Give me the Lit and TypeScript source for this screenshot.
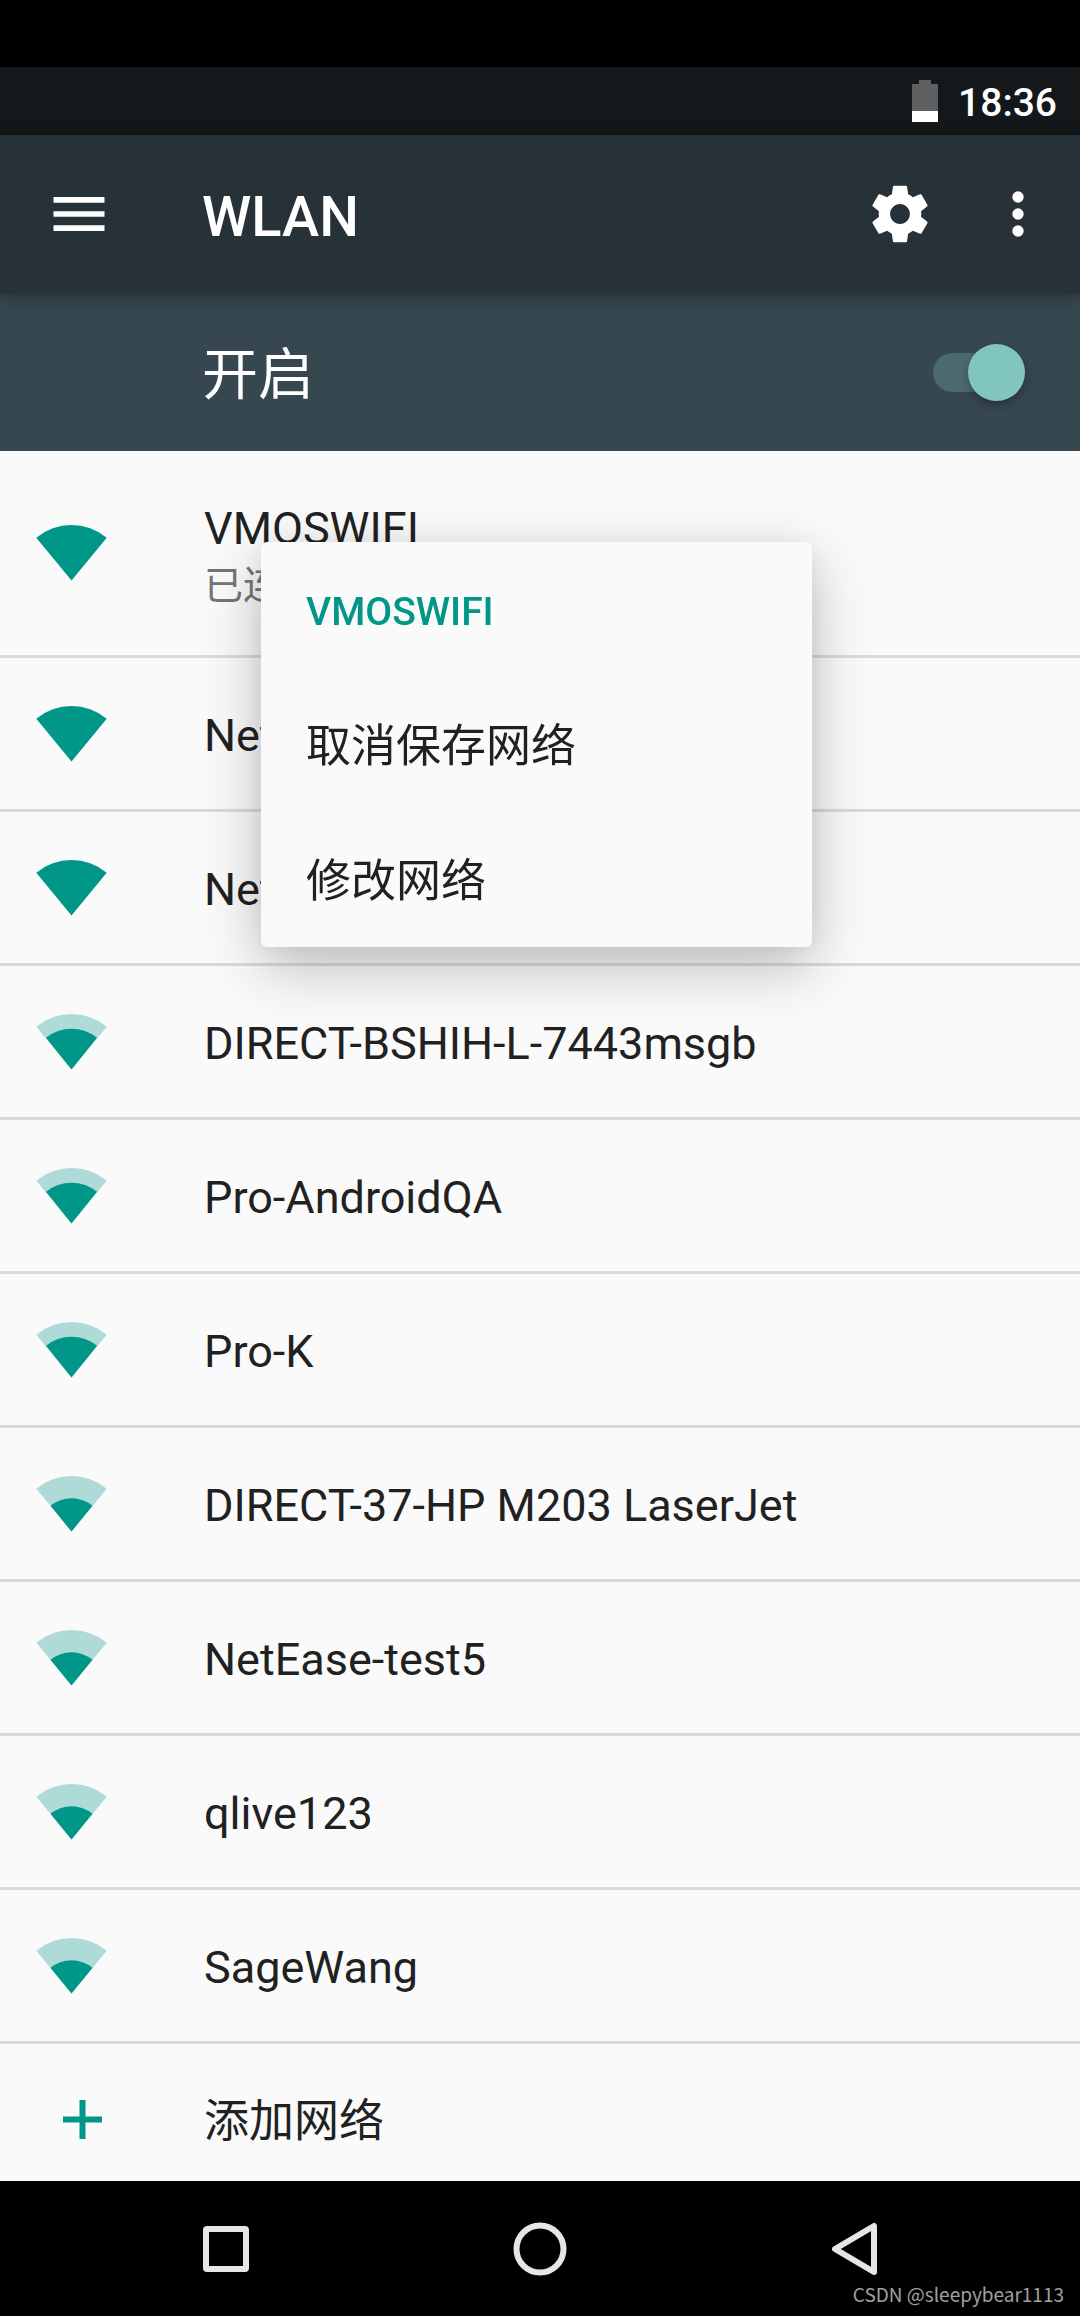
import { LitElement, html, css, svg, nothing } from "lit";
import { customElement, property, state } from "lit/decorators.js";

interface Network {
  name: string;
  level: 2 | 3 | 4;
  status?: string;
}

const NETWORKS: Network[] = [
  { name: "VMOSWIFI", level: 4, status: "已连接" },
  { name: "NetEase", level: 4 },
  { name: "NetEase", level: 4 },
  { name: "DIRECT-BSHIH-L-7443msgb", level: 3 },
  { name: "Pro-AndroidQA", level: 3 },
  { name: "Pro-K", level: 3 },
  { name: "DIRECT-37-HP M203 LaserJet", level: 2 },
  { name: "NetEase-test5", level: 2 },
  { name: "qlive123", level: 2 },
  { name: "SageWang", level: 2 },
];

/* Filled wedge for each signal level; the full fan sits faded behind it. */
const WEDGES = {
  2: "M36.5 55.5 L15.5 29.8 A33.2 33.2 0 0 1 57.5 29.8 Z",
  3: "M36.5 55.5 L11 23.8 A40.6 40.6 0 0 1 62 23.8 Z",
  4: "M36.5 55.5 L1.3 12.7 A55.4 55.4 0 0 1 71.7 12.7 Z",
};

@customElement("wifi-signal")
export class WifiSignal extends LitElement {
  static styles = css`
    :host {
      display: block;
      flex: none;
      color: #009688;
    }
    .icon {
      display: block;
      width: 72px;
      height: 56px;
      fill: currentColor;
    }
    .faded {
      opacity: 0.3;
    }
  `;

  @property({ type: Number }) level: 2 | 3 | 4 = 4;

  render() {
    return html`
      <svg class="icon" viewBox="0 0 72 56" aria-hidden="true">
        ${this.level < 4 ? svg`<path class="faded" d=${WEDGES[4]} />` : nothing}
        <path d=${WEDGES[this.level]} />
      </svg>
    `;
  }
}

@customElement("app-root")
export class AppRoot extends LitElement {
  static styles = css`
    :host {
      display: flex;
      flex-direction: column;
      height: 100vh;
      position: relative;
      background: #000;
      color: #212121;
      font-family: Roboto, "Noto Sans CJK SC", sans-serif;
      font-size: 45px;
      line-height: 54px;
    }
    button {
      margin: 0;
      padding: 0;
      border: 0;
      background: none;
      color: inherit;
      font: inherit;
      text-align: left;
      cursor: pointer;
    }
    svg {
      display: block;
    }
    h1,
    h2,
    ul {
      margin: 0;
      padding: 0;
      list-style: none;
      font-weight: 500;
    }
    .status {
      display: flex;
      flex: none;
      align-items: center;
      justify-content: flex-end;
      gap: 20px;
      height: 68px;
      margin-top: 67px;
      padding-right: 23px;
      background: #14181b;
      color: #fff;
      font-size: 39px;
      font-weight: 500;
    }
    .clock {
      padding-top: 4px;
    }
    .battery {
      width: 26px;
      height: 42px;
    }
    .toolbar {
      display: flex;
      flex: none;
      align-items: center;
      height: 158px;
      padding: 0 28px 0 45px;
      position: relative;
      z-index: 1;
      background: #273238;
      color: #fff;
      box-shadow: 0 4px 14px rgba(0, 0, 0, 0.35);
    }
    .title {
      flex: 1;
      padding: 5px 0 0 89px;
      font-size: 56px;
      line-height: 64px;
    }
    .tool {
      flex: none;
      fill: currentColor;
    }
    .tool svg {
      width: 68px;
      height: 68px;
    }
    .tool + .tool {
      margin-left: 50px;
    }
    .switch-bar {
      display: flex;
      flex: none;
      align-items: center;
      justify-content: space-between;
      height: 158px;
      padding: 0 55px 0 202px;
      background: #37474f;
      color: #fff;
      font-size: 56px;
      line-height: 64px;
    }
    .switch-label {
      padding-top: 5px;
    }
    .toggle {
      appearance: none;
      display: flex;
      align-items: center;
      width: 92px;
      height: 39px;
      margin: 0;
      border-radius: 20px;
      background: linear-gradient(90deg, #4b6a6d 60px, transparent 60px);
      cursor: pointer;
    }
    .toggle::before {
      content: "";
      width: 57px;
      height: 57px;
      border-radius: 50%;
      background: #eceff1;
      box-shadow: 0 4px 8px rgba(0, 0, 0, 0.3);
    }
    .toggle:checked {
      justify-content: flex-end;
    }
    .toggle:checked::before {
      background: #80c6bf;
    }
    .list {
      flex: 1;
      min-height: 0;
      overflow-y: auto;
      scrollbar-width: none;
      background: #fafafa;
      font-weight: 400;
    }
    .list li + li {
      border-top: 3px solid #dadada;
    }
    .row {
      display: flex;
      align-items: center;
      gap: 97px;
      width: 100%;
      height: 151px;
      padding-left: 35px;
    }
    .row.tall {
      height: 204px;
    }
    .label {
      display: flex;
      flex-direction: column;
      gap: 3px;
      padding-top: 4px;
    }
    .tall .label {
      padding-top: 9px;
    }
    .note {
      color: #757575;
      font-size: 39px;
    }
    .plus {
      width: 72px;
      height: 56px;
      fill: #009688;
    }
    .menu {
      position: absolute;
      left: 261px;
      top: 542px;
      z-index: 2;
      display: flex;
      flex-direction: column;
      width: 551px;
      border-radius: 6px;
      background: #fafafa;
      box-shadow: 0 20px 60px rgba(0, 0, 0, 0.25), 0 0 28px rgba(0, 0, 0, 0.06);
    }
    .menu-title,
    .menu-item {
      display: flex;
      align-items: center;
      box-sizing: border-box;
      height: 135px;
      padding: 4px 45px 0;
    }
    .menu-title {
      color: #009688;
      font-size: 39px;
    }
    .nav {
      display: grid;
      grid-template-columns: repeat(3, 1fr);
      flex: none;
      height: 135px;
      padding: 0 69px;
      background: #000;
    }
    .nav-button {
      display: grid;
      place-items: center;
    }
    .nav-button svg {
      width: 56px;
      height: 56px;
      fill: none;
      stroke: #e6e6e6;
      stroke-width: 6;
      stroke-linejoin: round;
    }
    .credit {
      position: absolute;
      right: 16px;
      bottom: 10px;
      color: #a0a0a0;
      font-family: "Noto Sans CJK SC", sans-serif;
      font-size: 19px;
      line-height: 24px;
    }
  `;

  @state() private enabled = true;

  private toggle(e: Event) {
    this.enabled = (e.target as HTMLInputElement).checked;
  }

  private renderNetwork(n: Network) {
    return html`
      <li>
        <button class="row ${n.status ? "tall" : ""}">
          <wifi-signal .level=${n.level}></wifi-signal>
          <span class="label">
            <span>${n.name}</span>
            ${n.status ? html`<span class="note">${n.status}</span>` : nothing}
          </span>
        </button>
      </li>
    `;
  }

  render() {
    return html`
      <div class="status">
        <svg class="battery" viewBox="0 0 26 42" role="img" aria-label="电池">
          <path fill="#5e5f60" d="M7 0h12v4h7v27H0V4h7z" />
          <path fill="#fff" d="M0 31h26v11H0z" />
        </svg>
        <span class="clock">18:36</span>
      </div>

      <header class="toolbar">
        <button class="tool" aria-label="菜单">
          <svg viewBox="0 0 24 24"><path d="M3 18h18v-2H3v2zm0-5h18v-2H3v2zm0-7v2h18V6H3z" /></svg>
        </button>
        <h1 class="title">WLAN</h1>
        <button class="tool" aria-label="设置">
          <svg viewBox="0 0 24 24">
            <path
              d="M19.43 12.98c.04-.32.07-.64.07-.98s-.03-.66-.07-.98l2.11-1.65c.19-.15.24-.42.12-.64l-2-3.46c-.12-.22-.39-.3-.61-.22l-2.49 1c-.52-.4-1.08-.73-1.69-.98l-.38-2.65C14.46 2.18 14.25 2 14 2h-4c-.25 0-.46.18-.49.42l-.38 2.65c-.61.25-1.17.59-1.69.98l-2.49-1c-.23-.09-.49 0-.61.22l-2 3.46c-.13.22-.07.49.12.64l2.11 1.65c-.04.32-.07.65-.07.98s.03.66.07.98l-2.11 1.65c-.19.15-.24.42-.12.64l2 3.46c.12.22.39.3.61.22l2.49-1c.52.4 1.08.73 1.69.98l.38 2.65c.03.24.24.42.49.42h4c.25 0 .46-.18.49-.42l.38-2.65c.61-.25 1.17-.59 1.69-.98l2.49 1c.23.09.49 0 .61-.22l2-3.46c.12-.22.07-.49-.12-.64l-2.11-1.65zM12 15.5c-1.93 0-3.5-1.57-3.5-3.5s1.57-3.5 3.5-3.5 3.5 1.57 3.5 3.5-1.57 3.5-3.5 3.5z"
            />
          </svg>
        </button>
        <button class="tool" aria-label="更多选项">
          <svg viewBox="0 0 24 24">
            <circle cx="12" cy="6" r="2" />
            <circle cx="12" cy="12" r="2" />
            <circle cx="12" cy="18" r="2" />
          </svg>
        </button>
      </header>

      <div class="switch-bar">
        <label class="switch-label" for="wlan">${this.enabled ? "开启" : "关闭"}</label>
        <input id="wlan" class="toggle" type="checkbox" .checked=${this.enabled} @change=${this.toggle} />
      </div>

      <ul class="list">
        ${NETWORKS.map((n) => this.renderNetwork(n))}
        <li>
          <button class="row">
            <svg class="plus" viewBox="0 0 72 56" aria-hidden="true">
              <path d="M44.5 8h6v16.5H67v6H50.5V47h-6V30.5H28v-6h16.5z" />
            </svg>
            <span class="label">添加网络</span>
          </button>
        </li>
      </ul>

      <nav class="nav">
        <button class="nav-button" aria-label="最近任务">
          <svg viewBox="0 0 56 56"><rect x="8" y="8" width="40" height="40" rx="1" /></svg>
        </button>
        <button class="nav-button" aria-label="主屏幕">
          <svg viewBox="0 0 56 56"><circle cx="28" cy="28" r="23.5" /></svg>
        </button>
        <button class="nav-button" aria-label="返回">
          <svg viewBox="0 0 56 56"><path d="M9 28 L48 5 V51 Z" /></svg>
        </button>
      </nav>

      <section class="menu">
        <h2 class="menu-title">VMOSWIFI</h2>
        <button class="menu-item">取消保存网络</button>
        <button class="menu-item">修改网络</button>
      </section>

      <div class="credit">CSDN @sleepybear1113</div>
    `;
  }
}
